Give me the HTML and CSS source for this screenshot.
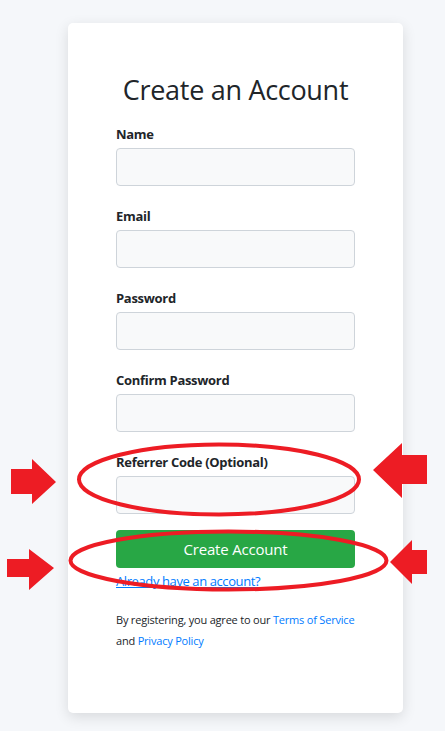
FILE: index.html
```html
<!DOCTYPE html>
<html lang="en">
<head>
    <meta charset="UTF-8">
    <meta name="viewport" content="width=device-width, initial-scale=1.0">
    <title>Create an Account</title>
    <link rel="stylesheet" href="styles.css">
</head>
<body>
    <div class="register-card">
        <h2 class="register-title">Create an Account</h2>
        <form class="register-form">
            <div class="form-group">
                <label for="name">Name</label>
                <input type="text" id="name">
            </div>
            <div class="form-group">
                <label for="email">Email</label>
                <input type="email" id="email">
            </div>
            <div class="form-group">
                <label for="password">Password</label>
                <input type="password" id="password">
            </div>
            <div class="form-group">
                <label for="confirm">Confirm Password</label>
                <input type="password" id="confirm">
            </div>
            <div class="form-group">
                <label for="referrer">Referrer Code (Optional)</label>
                <input type="text" id="referrer">
            </div>
            <button type="submit" class="btn-create">Create Account</button>
            <a href="#" class="login-link">Already have an account?</a>
        </form>
        <p class="terms">
            By registering, you agree to our <a href="#">Terms of Service</a>
            and <a href="#">Privacy Policy</a>
        </p>
    </div>

    <!-- Annotation marks drawn over the screenshot -->
    <svg class="annotations" width="445" height="731" viewBox="0 0 445 731">
        <ellipse cx="219" cy="479.5" rx="140" ry="35" />
        <ellipse cx="228.5" cy="560.5" rx="158" ry="29" />
        <polygon points="11,469 32,469 32,459 56,482 32,504 32,494 11,494" />
        <polygon points="7,559 29,559 29,549 54,568 29,590 29,577 7,577" />
        <polygon points="427,455 402,455 402,443 373,470 402,498 402,484 427,484" />
        <polygon points="427,550 412,550 412,540 390,562 412,584 412,574 427,574" />
    </svg>
</body>
</html>
```

FILE: styles.css
```css
* {
    margin: 0;
    padding: 0;
    box-sizing: border-box;
}

body {
    font-family: 'Open Sans', 'Noto Sans', sans-serif;
    background: #f5f7fa;
    color: #212529;
    min-height: 100vh;
    padding: 23px 0 18px 68px;
    position: relative;
    overflow: hidden;
}

.register-card {
    width: 335px;
    height: 690px;
    background: #ffffff;
    border-radius: 5px;
    box-shadow: 0 4px 14px rgba(0, 0, 0, 0.12);
    padding: 48px 48px 0;
}

.register-title {
    font-size: 27px;
    font-weight: 400;
    line-height: 34px;
    letter-spacing: -0.3px;
    white-space: nowrap;
    text-align: center;
    margin-top: 2px;
    margin-bottom: 17px;
    color: #212529;
}

.form-group {
    margin-bottom: 20px;
}

.form-group:last-of-type {
    margin-bottom: 16px;
}

.form-group label {
    display: block;
    font-size: 13px;
    font-weight: 700;
    line-height: 20px;
    letter-spacing: -0.3px;
    margin-bottom: 4px;
    color: #212529;
}

.form-group input {
    display: block;
    width: 100%;
    height: 38px;
    background: #f8f9fa;
    border: 1px solid #ced4da;
    border-radius: 4px;
    font-family: inherit;
}

.btn-create {
    display: block;
    width: 100%;
    height: 38px;
    background: #28a745;
    color: #ffffff;
    border: none;
    border-radius: 4px;
    font-family: inherit;
    font-size: 15px;
    letter-spacing: -0.2px;
}

.login-link {
    display: inline-block;
    margin-top: 3px;
    font-size: 13px;
    line-height: 20px;
    letter-spacing: -0.4px;
    color: #007bff;
}

.terms {
    margin-top: 18px;
    font-size: 11px;
    line-height: 21px;
    letter-spacing: -0.2px;
    color: #212529;
}

.terms a {
    color: #007bff;
    text-decoration: none;
}

/* Red annotation overlay */
.annotations {
    position: absolute;
    top: 0;
    left: 0;
    pointer-events: none;
}

.annotations ellipse {
    fill: none;
    stroke: #ed1c24;
    stroke-width: 4;
}

.annotations polygon {
    fill: #ed1c24;
}
```
